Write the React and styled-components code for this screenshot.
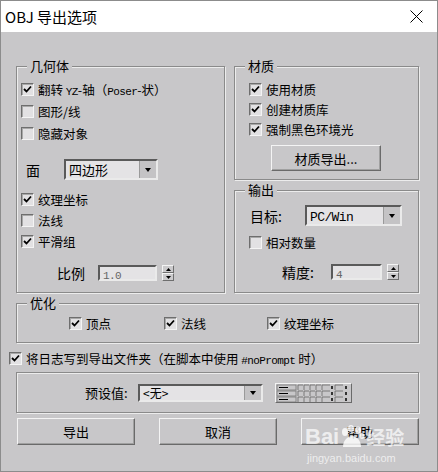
import React from "react";
import styled, { createGlobalStyle } from "styled-components";

const GlobalStyle = createGlobalStyle`
  body {
    margin: 0;
    background: #ffffff;
    font-family: "Noto Sans CJK SC", "Noto Sans", sans-serif;
    font-size: 12px;
    color: #000;
  }
  * { box-sizing: border-box; }
`;

const Dialog = styled.div`
  width: 438px;
  height: 472px;
  border: 1px solid #8c8c8c;
  background: #c8c7c9;
  display: flex;
  flex-direction: column;
  position: relative;
  overflow: hidden;
`;

const TitleBar = styled.div`
  height: 31px;
  background: #fff;
  display: flex;
  align-items: center;
  justify-content: space-between;
  padding: 0 14px 0 4px;
  font-size: 15px;
  flex-shrink: 0;
`;

const Body = styled.div`
  display: flex;
  flex-direction: column;
  padding: 34px 18px 0 15px;
`;

const TopRow = styled.div`
  display: flex;
  gap: 9px;
`;

const RightCol = styled.div`
  display: flex;
  flex-direction: column;
  gap: 10px;
`;

const Group = styled.div`
  position: relative;
  width: ${(p) => p.$w || "auto"};
  height: ${(p) => p.$h}px;
  margin-top: ${(p) => p.$mt || 0}px;
  border: 1px solid #8a8a8a;
  box-shadow: inset 1px 1px 0 #ececec, 1px 1px 0 #ececec;
  display: flex;
  flex-direction: column;
  padding: ${(p) => p.$pad || "0"};
`;

const GroupLabel = styled.span`
  position: absolute;
  top: -10px;
  left: 10px;
  padding: 0 3px;
  background: #c8c7c9;
  line-height: 18px;
  font-size: 13px;
`;

const Row = styled.div`
  display: flex;
  align-items: center;
  height: ${(p) => p.$h || 20}px;
  margin-top: ${(p) => p.$mt || 0}px;
  margin-left: ${(p) => p.$ml || 0}px;
  gap: ${(p) => p.$gap || 4}px;
  flex-shrink: 0;
`;

const Box = styled.span`
  width: 13px;
  height: 13px;
  flex-shrink: 0;
  border: 1px solid;
  border-color: #6e6e6e #f4f4f4 #f4f4f4 #6e6e6e;
  box-shadow: inset 1px 1px 0 #a8a8a8;
  background: #e2e1e3;
  display: flex;
  align-items: center;
  justify-content: center;
`;

const Mono = styled.span`
  font-family: "Liberation Mono", "DejaVu Sans Mono", monospace;
  font-size: ${(p) => p.$fs || 11}px;
  letter-spacing: -0.6px;
`;

const Label = styled.span`
  width: ${(p) => (p.$w ? `${p.$w}px` : "auto")};
  margin-left: ${(p) => p.$ml || 0}px;
  font-size: ${(p) => p.$fs || 13}px;
  flex-shrink: 0;
  white-space: nowrap;
`;

const Sunken = styled.div`
  width: ${(p) => p.$w}px;
  height: ${(p) => p.$h}px;
  border: 2px solid;
  border-color: #5a5a5a #eaeaea #eaeaea #5a5a5a;
  background: #e4e3e5;
  display: flex;
  align-items: center;
  flex-shrink: 0;
`;

const FieldText = styled.span`
  flex: 1;
  padding-left: 3px;
  font-size: ${(p) => p.$fs || 13}px;
  white-space: nowrap;
  color: ${(p) => (p.$dim ? "#666" : "#000")};
`;

const ArrowBtn = styled.span`
  width: 17px;
  align-self: stretch;
  background: #c4c3c5;
  border-left: 1px solid #9a9a9a;
  display: flex;
  align-items: center;
  justify-content: center;
`;

const Spin = styled.div`
  width: 12px;
  height: 16px;
  margin-left: 1px;
  display: flex;
  flex-direction: column;
  flex-shrink: 0;
`;

const SpinHalf = styled.span`
  flex: 1;
  border: 1px solid;
  border-color: #f4f4f4 #6e6e6e #6e6e6e #f4f4f4;
  background: #cbcacc;
  display: flex;
  align-items: center;
  justify-content: center;
`;

const Button = styled.div`
  width: ${(p) => p.$w || 118}px;
  height: ${(p) => p.$h || 27}px;
  margin-left: ${(p) => p.$ml || 0}px;
  margin-top: ${(p) => p.$mt || 0}px;
  border: 1px solid;
  border-color: #f4f4f4 #6a6a6a #6a6a6a #f4f4f4;
  box-shadow: inset -1px -1px 0 #a0a0a0;
  display: flex;
  align-items: center;
  justify-content: center;
  font-size: 13px;
  flex-shrink: 0;
`;

const ButtonRow = styled.div`
  display: flex;
  justify-content: space-between;
  margin-top: 5px;
  margin-left: 1px;
`;

const OptItem = styled.div`
  width: ${(p) => p.$w}px;
  display: flex;
  align-items: center;
  gap: 4px;
  flex-shrink: 0;
`;

const PresetIcon = styled.div`
  width: 77px;
  height: 20px;
  margin-left: 8px;
  border: 1px solid;
  border-color: #f4f4f4 #6a6a6a #6a6a6a #f4f4f4;
  display: flex;
  flex-shrink: 0;
`;

const Watermark = styled.div`
  position: absolute;
  left: 304px;
  top: 424px;
  color: rgba(255, 255, 255, 0.7);
  display: flex;
  flex-direction: column;
  pointer-events: none;
`;

const WmTop = styled.div`
  display: flex;
  align-items: center;
  font-family: "Liberation Sans", Arial, sans-serif;
  font-weight: bold;
  font-size: 22px;
  line-height: 24px;
`;

const WmCn = styled.span`
  font-family: "Noto Sans CJK SC", sans-serif;
  font-size: 19px;
  font-weight: bold;
  margin-left: 1px;
`;

const WmUrl = styled.div`
  font-family: "Liberation Sans", Arial, sans-serif;
  font-size: 11px;
  margin-top: 3px;
  margin-left: 2px;
`;

const Check = ({ on }) => (
  <Box>
    {on && (
      <svg width="9" height="9" viewBox="0 0 9 9">
        <path d="M1 4 L3.5 6.5 L8 1.5" stroke="#000" strokeWidth="1.8" fill="none" />
      </svg>
    )}
  </Box>
);

const Tri = ({ up }) => (
  <svg width="5" height="3" viewBox="0 0 5 3">
    <path d={up ? "M0 3 L2.5 0 L5 3 Z" : "M0 0 L5 0 L2.5 3 Z"} fill="#000" />
  </svg>
);

const Select = ({ w, h, children, fs }) => (
  <Sunken $w={w} $h={h}>
    <FieldText $fs={fs}>{children}</FieldText>
    <ArrowBtn>
      <svg width="6" height="4" viewBox="0 0 6 4">
        <path d="M0 0 L6 0 L3 4 Z" fill="#000" />
      </svg>
    </ArrowBtn>
  </Sunken>
);

const Spinner = ({ w, value }) => (
  <>
    <Sunken $w={w} $h={16}>
      <FieldText $dim>
        <Mono>{value}</Mono>
      </FieldText>
    </Sunken>
    <Spin>
      <SpinHalf>
        <Tri up />
      </SpinHalf>
      <SpinHalf>
        <Tri />
      </SpinHalf>
    </Spin>
  </>
);

const CheckRow = ({ on, children, h, mt, ml }) => (
  <Row $h={h} $mt={mt} $ml={ml}>
    <Check on={on} />
    <Label $fs={12.5}>{children}</Label>
  </Row>
);

const PresetRows = () => (
  <svg width="75" height="18" viewBox="0 0 75 18">
    {[1, 7, 13].map((y) => (
      <g key={y}>
        <rect x="1" y={y} width="19" height="5" fill="none" stroke="#777" strokeWidth="0.8" />
        <line x1="3" y1={y + 2.5} x2="12" y2={y + 2.5} stroke="#000" strokeWidth="1" />
        {[22, 28, 34, 40].map((x) => (
          <path key={x} d={`M${x} ${y + 5} L${x} ${y} L${x + 5} ${y}`} fill="none" stroke="#666" strokeWidth="0.8" />
        ))}
        <path d={`M46 ${y + 5} L46 ${y} L54 ${y}`} fill="none" stroke="#666" strokeWidth="0.8" />
        <rect x="55" y={y + 1} width="2" height="3" fill="#333" />
        <path d={`M59 ${y + 5} L59 ${y} L67 ${y}`} fill="none" stroke="#666" strokeWidth="0.8" />
        <rect x="69" y={y + 1} width="2" height="3" fill="#333" />
      </g>
    ))}
  </svg>
);

export default function App() {
  return (
    <>
      <GlobalStyle />
      <Dialog>
        <TitleBar>
          <span>OBJ 导出选项</span>
          <svg width="13" height="13" viewBox="0 0 13 13">
            <path d="M0.5 0.5 L12.5 12.5 M12.5 0.5 L0.5 12.5" stroke="#000" strokeWidth="1" />
          </svg>
        </TitleBar>
        <Body>
          <TopRow>
            <Group $w="209px" $h={227} $pad="11px 0 0 4px">
              <GroupLabel>几何体</GroupLabel>
              <CheckRow on h={22}>
                翻转 <Mono>YZ</Mono>-轴（<Mono>Poser</Mono>-状）
              </CheckRow>
              <CheckRow h={22}>图形/线</CheckRow>
              <CheckRow h={22}>隐藏对象</CheckRow>
              <Row $h={21} $mt={15} $gap={0}>
                <Label $w={34} $ml={5} $fs={14}>面</Label>
                <Select w={94} h={21}>四边形</Select>
              </Row>
              <CheckRow on h={21} mt={9}>纹理坐标</CheckRow>
              <CheckRow h={21}>法线</CheckRow>
              <CheckRow on h={21}>平滑组</CheckRow>
              <Row $h={16} $mt={13} $gap={0}>
                <Label $w={37} $ml={36} $fs={14}>比例</Label>
                <Spinner w={59} value="1.0" />
              </Row>
            </Group>
            <RightCol>
              <Group $w="185px" $h={114} $pad="12px 0 0 14px">
                <GroupLabel>材质</GroupLabel>
                <CheckRow on>使用材质</CheckRow>
                <CheckRow on>创建材质库</CheckRow>
                <CheckRow on>强制黑色环境光</CheckRow>
                <Button $w={110} $h={26} $ml={22} $mt={6}>
                  材质导出...
                </Button>
              </Group>
              <Group $w="185px" $h={103} $pad="14px 0 0 14px">
                <GroupLabel>输出</GroupLabel>
                <Row $h={21} $gap={0}>
                  <Label $w={51} $ml={1} $fs={14}>目标:</Label>
                  <Select w={97} h={21}>
                    <Mono $fs={13}>PC/Win</Mono>
                  </Select>
                </Row>
                <CheckRow mt={6}>相对数量</CheckRow>
                <Row $h={16} $mt={12} $gap={0}>
                  <Label $w={45} $ml={33} $fs={14}>精度:</Label>
                  <Spinner w={51} value="4" />
                </Row>
              </Group>
            </RightCol>
          </TopRow>
          <Group $h={40} $mt={10} $pad="9px 0 0 52px">
            <GroupLabel>优化</GroupLabel>
            <Row $h={20} $gap={0}>
              <OptItem $w={91}>
                <Check on />
                <Label $fs={12.5}>顶点</Label>
              </OptItem>
              <OptItem $w={99}>
                <Check on />
                <Label $fs={12.5}>法线</Label>
              </OptItem>
              <OptItem $w={100}>
                <Check on />
                <Label $fs={12.5}>纹理坐标</Label>
              </OptItem>
            </Row>
          </Group>
          <CheckRow on h={16} mt={7} ml={-7}>
            将日志写到导出文件夹（在脚本中使用 <Mono>#noPrompt</Mono> 时）
          </CheckRow>
          <Group $h={41} $mt={6} $pad="0 0 0 68px">
            <Row $h={39} $gap={0}>
              <Label $w={49} $fs={13}>预设值:</Label>
              <Select w={125} h={18} fs={12}>
                &lt;无&gt;
              </Select>
              <PresetIcon>
                <PresetRows />
              </PresetIcon>
            </Row>
          </Group>
          <ButtonRow>
            <Button>导出</Button>
            <Button>取消</Button>
            <Button>帮助</Button>
          </ButtonRow>
        </Body>
        <Watermark>
          <WmTop>
            Bai
            <svg width="26" height="24" viewBox="0 0 26 24">
              <g fill="rgba(255,255,255,0.8)">
                <ellipse cx="6" cy="7" rx="3" ry="4" />
                <ellipse cx="12" cy="3.5" rx="3" ry="3.5" />
                <ellipse cx="19" cy="5" rx="3" ry="3.5" />
                <ellipse cx="23" cy="11" rx="2.5" ry="3" />
                <path d="M4 22 C4 15 9 11 13 11 C18 11 22 16 22 22 Z" />
              </g>
            </svg>
            <WmCn>经验</WmCn>
          </WmTop>
          <WmUrl>jingyan.baidu.com</WmUrl>
        </Watermark>
      </Dialog>
    </>
  );
}
